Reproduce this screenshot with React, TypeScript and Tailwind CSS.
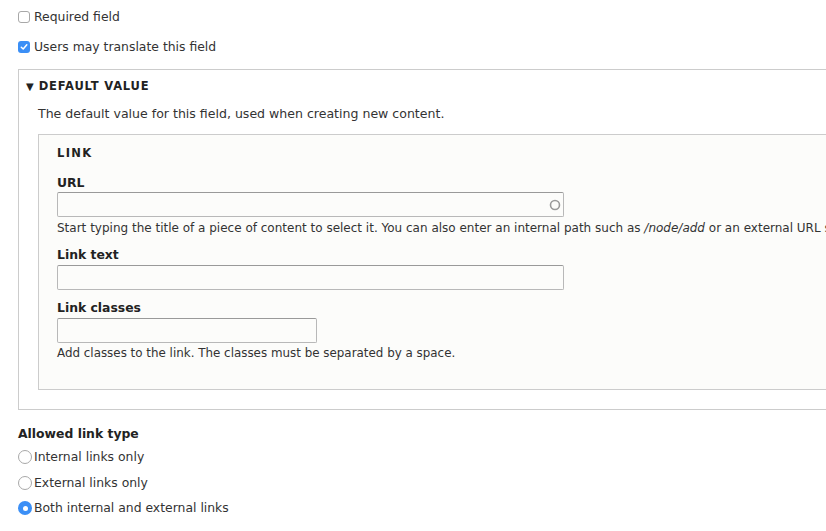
import React from 'react';

const font = { fontFamily: '"DejaVu Sans", "Liberation Sans", sans-serif' };

const Checkbox: React.FC<{ checked?: boolean; label: string; className?: string }> = ({ checked, label, className }) => (
    <div className={`flex items-center h-[18px] ${className ?? ''}`}>
        {checked ? (
            <span className="w-[12px] h-[12px] rounded-[3px] bg-[#3b8ff6] flex items-center justify-center mr-[4px]">
                <svg width="8" height="8" viewBox="0 0 8 8">
                    <path d="M1.3 4.2 L3.2 6 L6.8 1.8" fill="none" stroke="white" strokeWidth="1.5" strokeLinecap="round" strokeLinejoin="round" />
                </svg>
            </span>
        ) : (
            <span className="w-[12px] h-[12px] rounded-[3px] border border-[#a8a8a8] bg-white mr-[4px]" />
        )}
        <span className="text-[#333]">{label}</span>
    </div>
);

const Radio: React.FC<{ checked?: boolean; label: string; className?: string }> = ({ checked, label, className }) => (
    <div className={`flex items-center h-[18px] ${className ?? ''}`}>
        {checked ? (
            <span className="w-[14px] h-[14px] rounded-full bg-[#3b8ff6] flex items-center justify-center mr-[2px]">
                <span className="w-[5px] h-[5px] rounded-full bg-white" />
            </span>
        ) : (
            <span className="w-[14px] h-[14px] rounded-full border border-[#a8a8a8] bg-white mr-[2px]" />
        )}
        <span className="text-[#333]">{label}</span>
    </div>
);

const TextInput: React.FC<{ width: string; throbber?: boolean; className?: string }> = ({ width, throbber, className }) => (
    <div className={`relative h-[25px] ${width} border border-[#b8b8b8] border-t-[#999] rounded-[2px] bg-[#fcfcfa] ${className ?? ''}`}>
        {throbber && (
            <svg className="absolute right-[2px] top-[6px]" width="12" height="12" viewBox="0 0 12 12">
                <circle cx="6" cy="6" r="4.5" fill="none" stroke="#9a9a9a" strokeWidth="1.6" />
            </svg>
        )}
    </div>
);

export default function App() {
    return (
        <div className="w-[826px] h-[531px] overflow-hidden bg-white text-[12.4px] text-[#333]" style={font}>
            <div className="pl-[18px] pt-[8px]">
                <Checkbox label="Required field" />
                <Checkbox checked label="Users may translate this field" className="mt-[12px]" />
            </div>

            <div className="ml-[18px] mt-[13px] border-l border-t border-b border-[#ccc] pl-[19px] pb-[19px]">
                <div className="flex items-center h-[18px] mt-[8px] -ml-[12px]">
                    <span className="text-[10px] text-[#222] mr-[5px] leading-none">▼</span>
                    <span className="font-bold uppercase tracking-[0.07em] text-[#222] text-[11.5px]">Default value</span>
                </div>
                <p className="leading-[18px] mt-[9px] text-[12.55px]">The default value for this field, used when creating new content.</p>

                <div className="mt-[11px] border-l border-t border-b border-[#ccc] bg-[#fcfcfa] pl-[18px] pt-[9px] pb-[27px]">
                    <div className="font-bold uppercase tracking-[0.12em] text-[#222] text-[11.5px] leading-[18px]">Link</div>

                    <div className="mt-[12px] font-bold text-[#222] leading-[18px]">URL</div>
                    <TextInput width="w-[507px]" throbber />
                    <p className="mt-[2px] leading-[18px] whitespace-nowrap text-[12px]">
                        Start typing the title of a piece of content to select it. You can also enter an internal path such as <em>/node/add</em> or an external URL such as http://example.com.
                    </p>

                    <div className="mt-[9px] font-bold text-[#222] leading-[18px]">Link text</div>
                    <TextInput width="w-[507px]" className="mt-[1px]" />

                    <div className="mt-[9px] font-bold text-[#222] leading-[18px]">Link classes</div>
                    <TextInput width="w-[260px]" className="mt-[1px]" />
                    <p className="mt-[1px] leading-[18px] text-[11.9px]">Add classes to the link. The classes must be separated by a space.</p>
                </div>
            </div>

            <div className="pl-[18px] mt-[15px]">
                <div className="font-bold text-[#222] leading-[18px]">Allowed link type</div>
                <Radio label="Internal links only" className="mt-[5px]" />
                <Radio label="External links only" className="mt-[8px]" />
                <Radio checked label="Both internal and external links" className="mt-[7px]" />
            </div>
        </div>
    );
}
